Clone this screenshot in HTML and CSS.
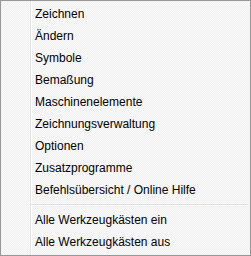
FILE: index.html
```html
<!DOCTYPE html>
<html lang="de">
<head>
    <meta charset="UTF-8">
    <meta name="viewport" content="width=device-width, initial-scale=1.0">
    <title>Kontextmenü</title>
    <link rel="stylesheet" href="styles.css">
</head>
<body>
    <!-- Kontextmenü -->
    <ul class="menu">
        <li class="menu-item">Zeichnen</li>
        <li class="menu-item">Ändern</li>
        <li class="menu-item">Symbole</li>
        <li class="menu-item">Bemaßung</li>
        <li class="menu-item">Maschinenelemente</li>
        <li class="menu-item">Zeichnungsverwaltung</li>
        <li class="menu-item">Optionen</li>
        <li class="menu-item">Zusatzprogramme</li>
        <li class="menu-item">Befehlsübersicht / Online Hilfe</li>
        <li class="menu-separator"></li>
        <li class="menu-item">Alle Werkzeugkästen ein</li>
        <li class="menu-item">Alle Werkzeugkästen aus</li>
    </ul>
</body>
</html>
```

FILE: styles.css
```css
* {
    margin: 0;
    padding: 0;
    box-sizing: border-box;
}

body {
    background-color: #f0f0f0;
    font-family: 'Segoe UI', 'Liberation Sans', Arial, sans-serif;
    font-size: 12px;
    color: #000;
}

.menu {
    list-style: none;
    width: 251px;
    height: 256px;
    padding: 2px;
    border: 1px solid #979797;
    background-color: #f5f5f5;
    /* Trennlinie der Symbolspalte */
    background-image:
        linear-gradient(to right, transparent 29px, #e2e3e3 29px, #e2e3e3 30px, #fff 30px, #fff 31px, transparent 31px),
        repeating-conic-gradient(#f0f0f0 0 25%, #fafafa 0 50%);
    background-size: 100% 100%, 2px 2px;
}

.menu-item {
    height: 22px;
    line-height: 22px;
    padding-left: 32px;
    white-space: nowrap;
}

.menu-separator {
    height: 2px;
    margin: 3px 0 3px 28px;
    border-top: 1px solid #e0e0e0;
    border-bottom: 1px solid #fff;
}
```
